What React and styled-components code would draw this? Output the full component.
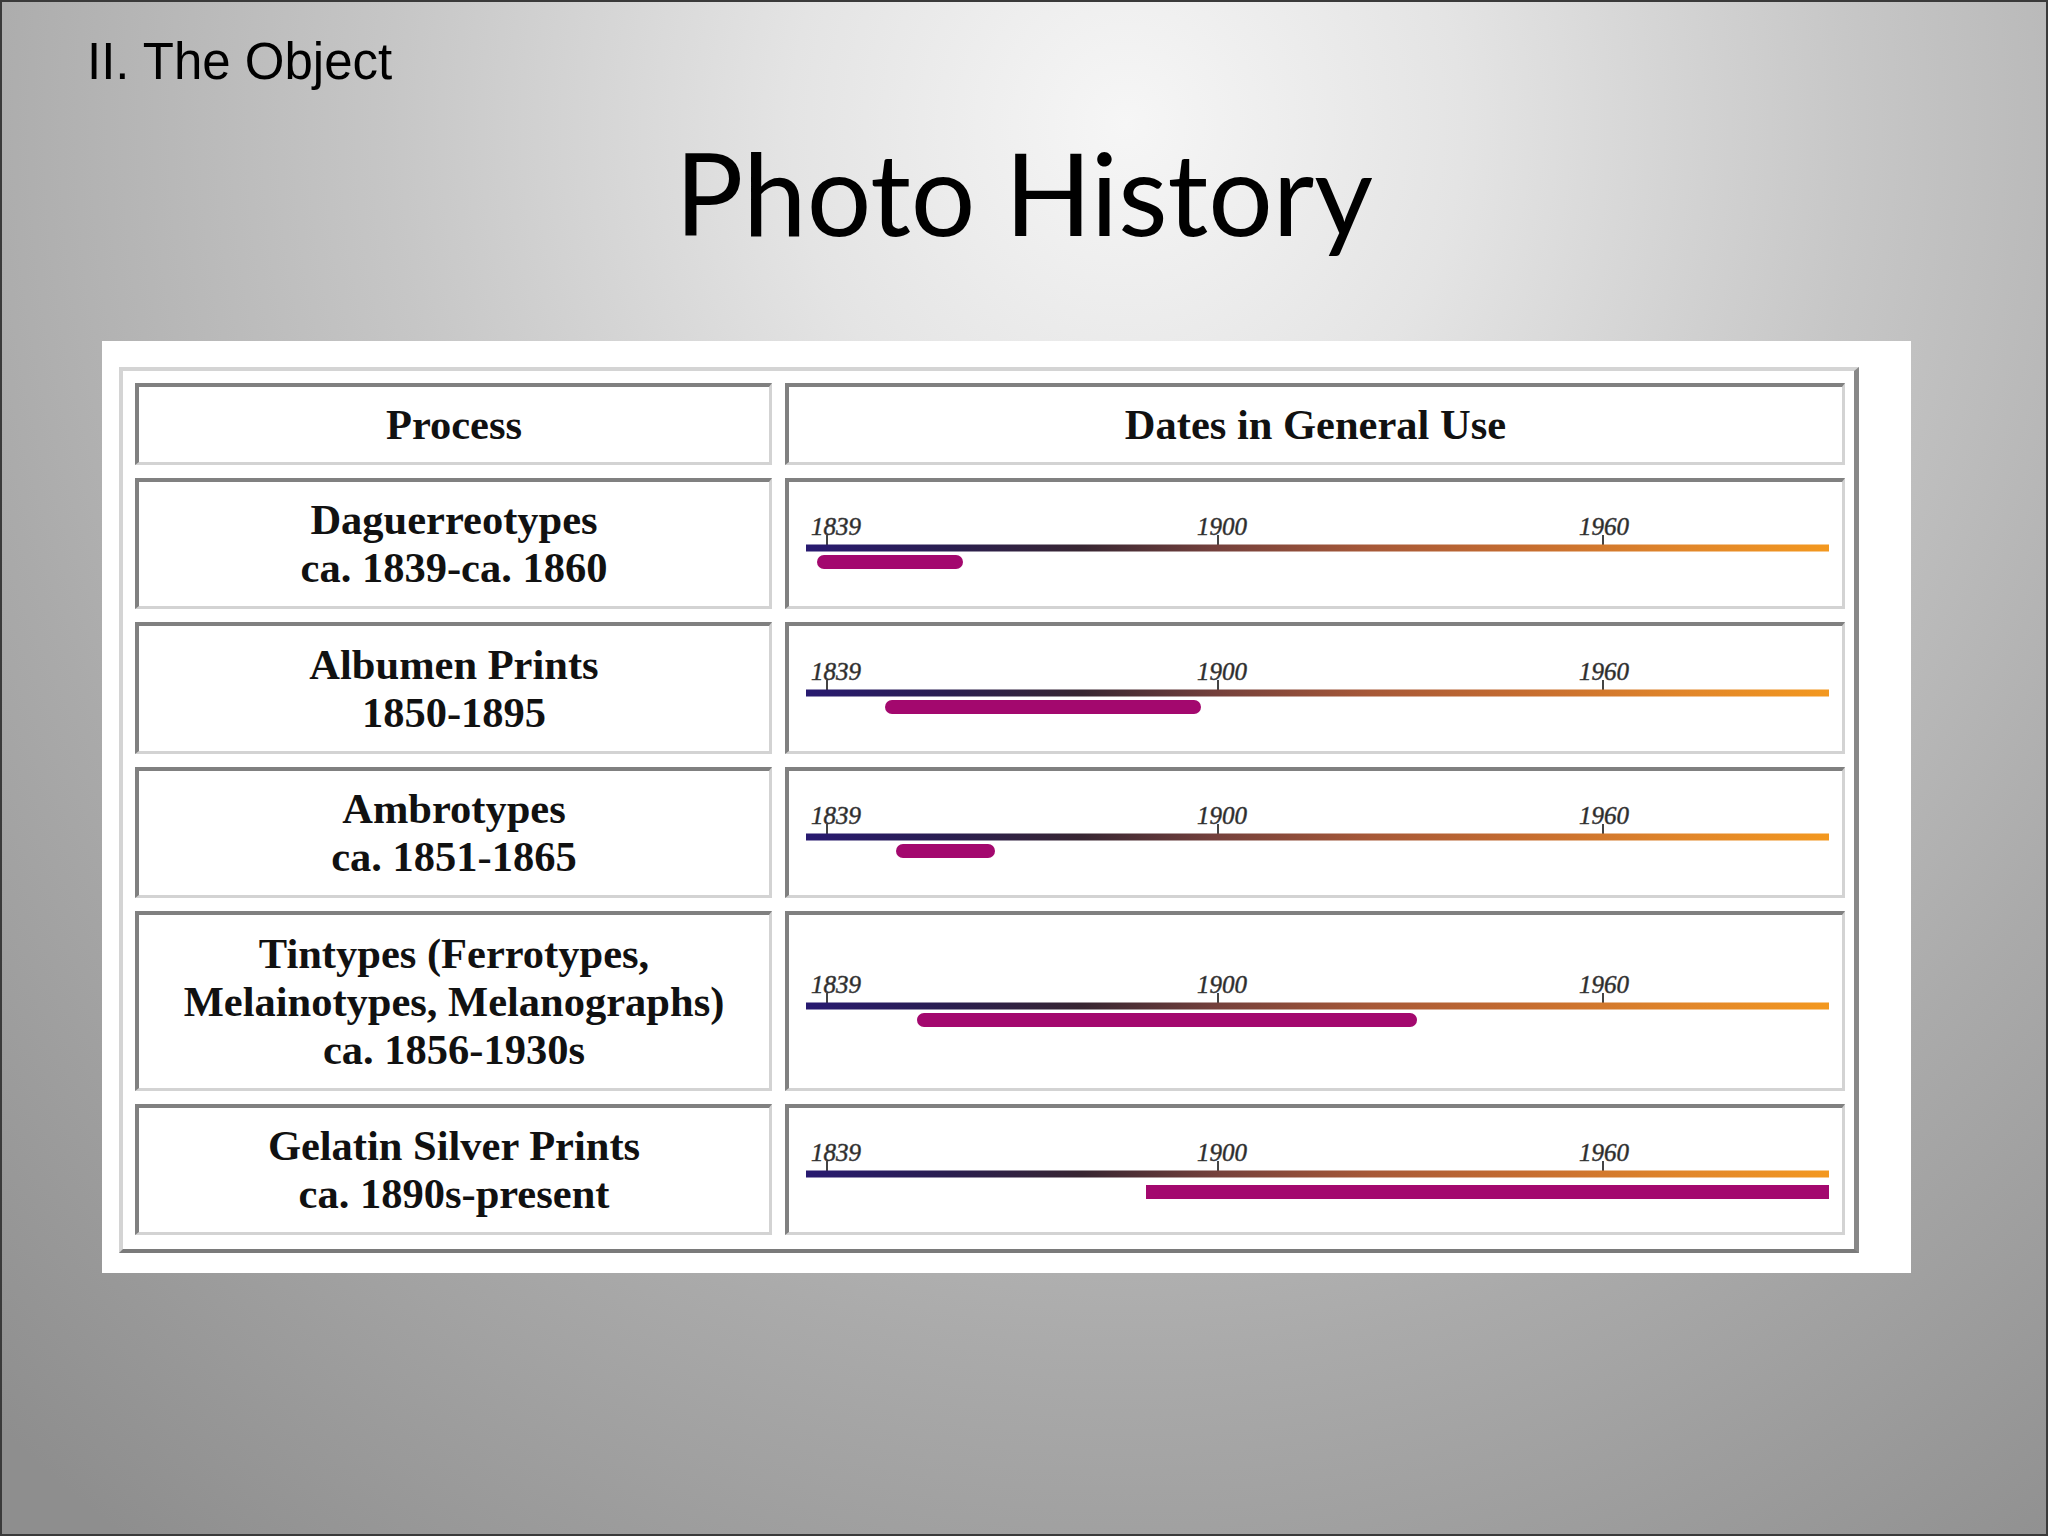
import React from 'react';
import styled, { createGlobalStyle } from 'styled-components';

const GlobalStyle = createGlobalStyle`
  html, body { margin: 0; padding: 0; }
  body { width: 2048px; height: 1536px; overflow: hidden; background: #888; }
  *, *::before, *::after { box-sizing: border-box; }
`;

const Slide = styled.div`
  width: 2048px;
  height: 1536px;
  border: 2px solid #3a3a3a;
  background: radial-gradient(ellipse 82% 115% at 55% 8%, #f6f6f6 0%, #e4e4e4 20%, #c6c6c6 44%, #aaaaaa 70%, #8e8e8e 100%);
  display: flex;
  flex-direction: column;
  font-family: "Liberation Sans", Arial, sans-serif;
  color: #000;
`;

const Section = styled.div`
  margin: 34px 0 0 85px;
  font-size: 51px;
  line-height: 51px;
  font-family: "Liberation Sans", Arial, sans-serif;
`;

const Title = styled.h1`
  margin: 35px 0 0 0;
  font-family: Lato, "Open Sans", sans-serif;
  font-weight: 400;
  font-size: 114px;
  line-height: 139px;
  text-align: center;
`;

const Panel = styled.div`
  margin: 80px 0 0 100px;
  width: 1809px;
  height: 932px;
  background: #fff;
  padding: 26px 52px 20px 17px;
`;

const Table = styled.div`
  border-style: solid;
  border-width: 4px 5px 4px 4px;
  border-color: #d4d4d4 #888 #7a7a7a #d4d4d4;
  background: #fff;
  padding: 12px 9px 14px 12px;
  display: grid;
  grid-template-columns: 637px 1060px;
  grid-template-rows: 82px 131px 132px 131px 180px 131px;
  gap: 13px;
`;

const Cell = styled.div`
  border-style: solid;
  border-width: 4px 3px 3px 4px;
  border-color: #808080 #d3d3d3 #d3d3d3 #808080;
  display: flex;
  align-items: center;
  justify-content: center;
  overflow: hidden;
`;

const TextCell = styled(Cell)`
  font-family: "Liberation Serif", "Times New Roman", serif;
  font-weight: 700;
  font-size: 42.5px;
  line-height: 48px;
  text-align: center;
  color: #111;
`;

const TimeCell = styled(Cell)`
  justify-content: flex-start;
`;

const TimelineSvg = styled.svg`
  display: block;
  flex: none;
`;

const PX = (year) => 38 + (year - 1839) * 6.41;

function Timeline({ from, to, square, barY = 43 }) {
  const ticks = [
    { year: 1839, x: 38, lx: 22, anchor: 'start' },
    { year: 1900, x: PX(1900), lx: PX(1900) + 4, anchor: 'middle' },
    { year: 1960, x: 814, lx: 815, anchor: 'middle' },
  ];
  const id = `grad-${from}`;
  return (
    <TimelineSvg width="1054" height="64" viewBox="0 0 1054 64">
      <defs>
        <linearGradient id={id} x1="0" y1="0" x2="1" y2="0">
          <stop offset="0%" stopColor="#281a70" />
          <stop offset="14%" stopColor="#2a1e50" />
          <stop offset="27%" stopColor="#382632" />
          <stop offset="40%" stopColor="#74403c" />
          <stop offset="55%" stopColor="#a65838" />
          <stop offset="70%" stopColor="#c56c30" />
          <stop offset="86%" stopColor="#e1862a" />
          <stop offset="100%" stopColor="#f3981f" />
        </linearGradient>
      </defs>
      {ticks.map((t) => (
        <g key={t.year}>
          <text
            x={t.lx}
            y="23"
            textAnchor={t.anchor}
            fontFamily='"Liberation Serif", "Times New Roman", serif'
            fontStyle="italic"
            fontSize="25"
            fill="#2a2a2a"
            stroke="#444"
            strokeWidth="0.5"
          >
            {t.year}
          </text>
          <rect x={t.x - 1} y="23" width="2" height="11" fill="#444" />
        </g>
      ))}
      <rect x="17" y="32.5" width="1023" height="7" fill={`url(#${id})`} />
      <rect
        x={from}
        y={barY}
        width={to - from}
        height="14"
        rx={square ? 0 : 7}
        fill="#a3086e"
      />
      {square && <circle cx={from + 7} cy={barY + 7} r="7" fill="#a3086e" />}
    </TimelineSvg>
  );
}

const rows = [
  { lines: ['Daguerreotypes', 'ca. 1839-ca. 1860'], from: 28, to: 174 },
  { lines: ['Albumen Prints', '1850-1895'], from: 96, to: 412 },
  { lines: ['Ambrotypes', 'ca. 1851-1865'], from: 107, to: 206 },
  { lines: ['Tintypes (Ferrotypes,', 'Melainotypes, Melanographs)', 'ca. 1856-1930s'], from: 128, to: 628 },
  { lines: ['Gelatin Silver Prints', 'ca. 1890s-present'], from: 357, to: 1040, square: true, barY: 47 },
];

export default function App() {
  return (
    <>
      <GlobalStyle />
      <Slide>
        <Section>II. The Object</Section>
        <Title>Photo History</Title>
        <Panel>
          <Table>
            <TextCell>Process</TextCell>
            <TextCell>Dates in General Use</TextCell>
            {rows.map((r) => (
              <React.Fragment key={r.lines[0]}>
                <TextCell>
                  <div>
                    {r.lines.map((l) => (
                      <div key={l}>{l}</div>
                    ))}
                  </div>
                </TextCell>
                <TimeCell>
                  <Timeline from={r.from} to={r.to} square={r.square} barY={r.barY} />
                </TimeCell>
              </React.Fragment>
            ))}
          </Table>
        </Panel>
      </Slide>
    </>
  );
}
